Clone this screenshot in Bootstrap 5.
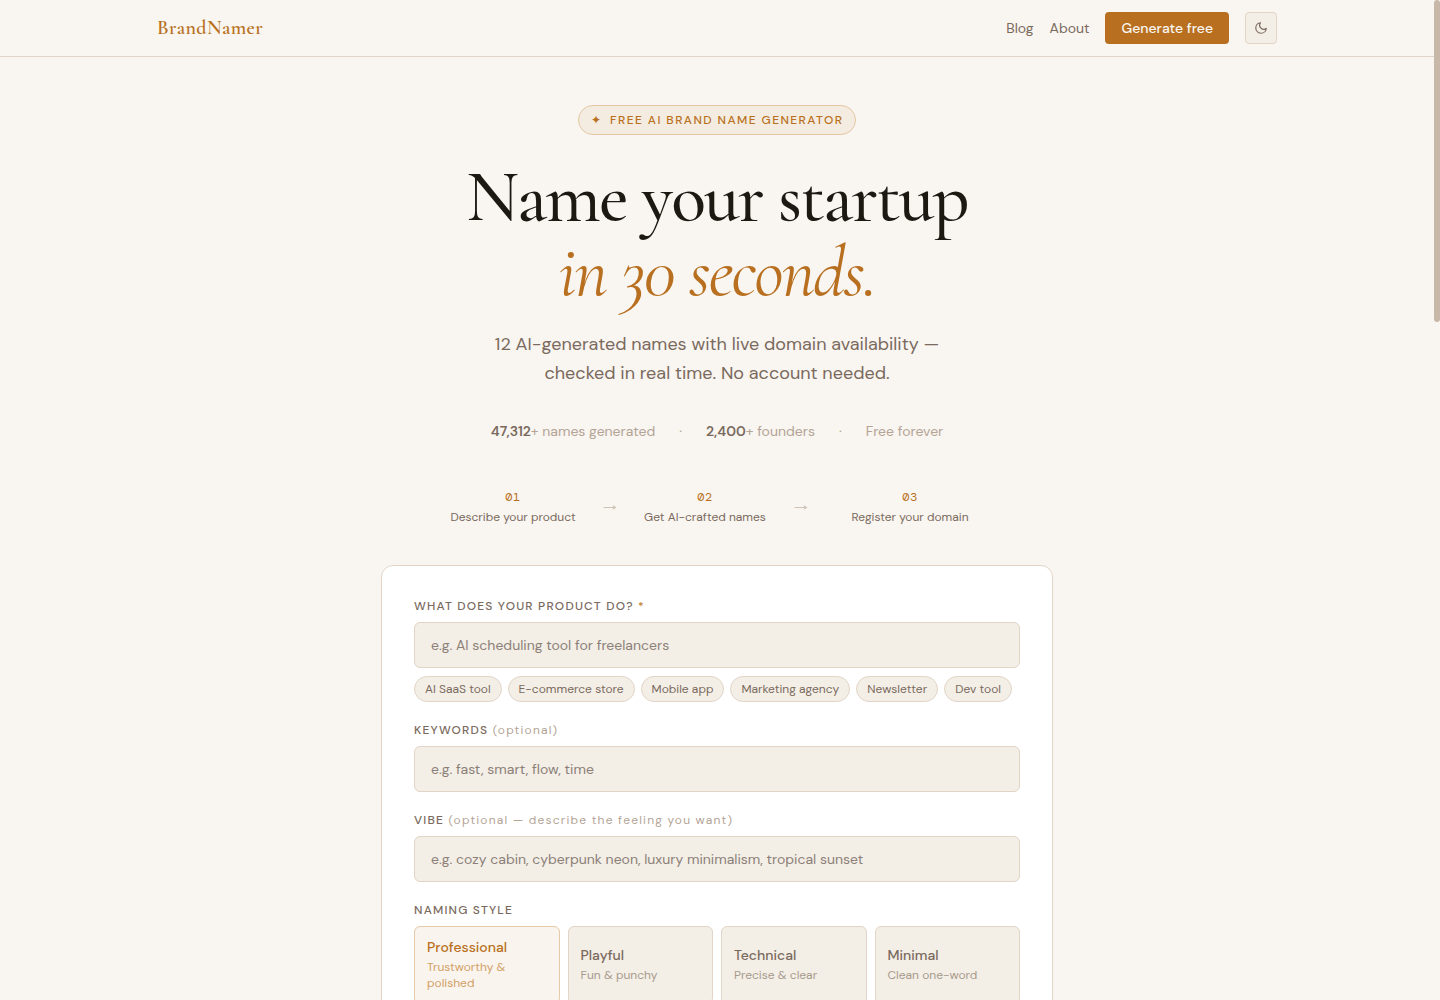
<!DOCTYPE html>
<html lang="en">
<head>
<meta charset="utf-8">
<meta name="viewport" content="width=device-width, initial-scale=1">
<title>BrandNamer</title>
<link rel="stylesheet" href="https://cdn.jsdelivr.net/npm/bootstrap@5.3.0/dist/css/bootstrap.min.css">
<style>
:root {
  --ink: #1c1812;
  --ink-soft: #7a6a5e;
  --ink-faint: #b3a496;
  --accent: #b87020;
  --paper: #f9f5f0;
  --sand: #f3eee6;
  --line: #e2d5c7;
  --serif: "Cormorant Garamond", "Liberation Serif", serif;
  --sans: "DM Sans", Inter, sans-serif;
}
html { scrollbar-width: none; }
html::-webkit-scrollbar { display: none; }
body { background: var(--paper); color: var(--ink-soft); font-family: var(--sans); padding-right: 6px; }
.scroll-thumb { position: fixed; top: 0; right: 0; width: 6px; height: 322px; border-radius: 3px; background: #c8b8a8; }

.site-nav { border-bottom: 1px solid var(--line); }
.nav-inner { max-width: 1120px; height: 56px; }
.logo { font: 600 20px/24px var(--serif); letter-spacing: 0.02em; color: var(--accent); text-decoration: none; }
.nav-text { font-size: 14px; line-height: 20px; color: var(--ink-soft); text-decoration: none; }
.btn-accent { background: var(--accent); color: var(--paper); font-size: 14px; line-height: 20px; font-weight: 500; padding: 6px 16px; border: 0; border-radius: 4px; }
.btn-accent:hover { background: #a5631a; color: var(--paper); }
.theme-btn { width: 32px; height: 32px; border: 1px solid var(--line); border-radius: 4px; background: var(--sand); color: var(--ink-soft); }

.page-col { max-width: 672px; padding-top: 48px; }
.eyebrow { height: 30px; padding: 0 12px; border: 1px solid #e3c7a3; border-radius: 15px; background: #f4ece0; color: var(--accent); font-size: 12px; line-height: 16px; font-weight: 500; letter-spacing: 0.12em; margin-bottom: 25px; }
.hero-title { font: 500 72px/75px var(--serif); letter-spacing: -0.025em; color: var(--ink); margin-bottom: 20px; }
.hero-title em { display: block; font-weight: 400; color: var(--accent); }
.hero-sub { font-size: 18px; line-height: 29px; max-width: 480px; margin-bottom: 32px; }
.stats { font-size: 14px; line-height: 22px; color: var(--ink-faint); gap: 24px; margin-bottom: 45px; }
.stats strong { font-weight: 600; color: var(--ink-soft); }
.steps { display: grid; grid-template-columns: 168px 26px 164px 28px 190px; justify-content: center; align-items: center; justify-items: center; text-align: center; margin-bottom: 38px; font-size: 12px; line-height: 20px; }
.step-no { font-family: "DM Mono", "JetBrains Mono", "Liberation Mono", monospace; letter-spacing: 0.05em; color: var(--accent); }
.step-arrow { color: #cfc3b6; }

.form-panel { background: #fff; border: 1px solid var(--line); border-radius: 12px; padding: 32px; margin-bottom: 64px; }
.field { margin-bottom: 20px; }
.field-label { display: block; font-size: 12px; line-height: 16px; font-weight: 500; letter-spacing: 0.1em; margin-bottom: 8px; }
.field-label span { font-weight: 400; color: var(--ink-faint); }
.field-label .req { color: var(--accent); }
.field .form-control { height: 46px; padding: 0 16px; background: var(--sand); border: 1px solid var(--line); border-radius: 6px; font-size: 14px; color: var(--ink); }
.field .form-control::placeholder { color: #8b8078; opacity: 1; }
.chips { gap: 6px; margin-top: 8px; }
.chip { height: 26px; padding: 0 10px; border: 1px solid var(--line); border-radius: 13px; background: var(--sand); color: var(--ink-soft); font-size: 12px; line-height: 16px; }
.style-grid { display: grid; grid-template-columns: repeat(4, minmax(0, 1fr)); gap: 8px; }
.style-card { padding: 12px; border: 1px solid var(--line); border-radius: 6px; background: var(--sand); color: var(--ink-soft); text-align: left; font-size: 14px; line-height: 16px; font-weight: 500; }
.style-card small { display: block; margin-top: 4px; font-size: 12px; line-height: 16px; font-weight: 400; color: #a79a8d; }
.style-card.picked { background: #f9f4ed; border-color: #e6c9a6; color: var(--accent); }
.style-card.picked small { color: #d2a067; }
</style>
<script src="https://cdn.jsdelivr.net/npm/bootstrap@5.3.0/dist/js/bootstrap.bundle.min.js"></script>
</head>
<body>
<header class="site-nav">
  <nav class="nav-inner mx-auto d-flex align-items-center justify-content-between">
    <a class="logo" href="#">BrandNamer</a>
    <div class="d-flex align-items-center gap-3">
      <a class="nav-text" href="#">Blog</a>
      <a class="nav-text" href="#">About</a>
      <a class="btn btn-accent" href="#generate">Generate free</a>
      <button type="button" class="theme-btn p-0 d-flex align-items-center justify-content-center" aria-label="Toggle theme">
        <svg width="14" height="14" viewBox="0 0 24 24" fill="none" stroke="currentColor" stroke-width="2" stroke-linecap="round" stroke-linejoin="round" aria-hidden="true"><path d="M21 12.79A9 9 0 1 1 11.21 3 7 7 0 0 0 21 12.79z"/></svg>
      </button>
    </div>
  </nav>
</header>

<main class="page-col mx-auto">
  <section class="d-flex flex-column align-items-center text-center">
    <div class="eyebrow d-inline-flex align-items-center gap-2"><span>✦</span>FREE AI BRAND NAME GENERATOR</div>
    <h1 class="hero-title">Name your startup <em>in 30 seconds.</em></h1>
    <p class="hero-sub">12 AI-generated names with live domain availability —<br>checked in real time. No account needed.</p>
    <div class="stats d-flex">
      <span><strong>47,312</strong>+ names generated</span><span>·</span>
      <span><strong>2,400</strong>+ founders</span><span>·</span>
      <span>Free forever</span>
    </div>
  </section>

  <div class="steps">
    <div><div class="step-no">01</div>Describe your product</div>
    <svg class="step-arrow" width="14" height="7" viewBox="0 0 14 7" aria-hidden="true"><path d="M0.5 3.5H11" stroke="currentColor"/><path d="M9.5 1L13.5 3.5L9.5 6L10.5 3.5Z" fill="currentColor"/></svg>
    <div><div class="step-no">02</div>Get AI-crafted names</div>
    <svg class="step-arrow" width="14" height="7" viewBox="0 0 14 7" aria-hidden="true"><path d="M0.5 3.5H11" stroke="currentColor"/><path d="M9.5 1L13.5 3.5L9.5 6L10.5 3.5Z" fill="currentColor"/></svg>
    <div><div class="step-no">03</div>Register your domain</div>
  </div>

  <form class="form-panel" id="generate">
    <div class="field">
      <label class="field-label" for="product">WHAT DOES YOUR PRODUCT DO? <span class="req">*</span></label>
      <input class="form-control" id="product" type="text" placeholder="e.g. AI scheduling tool for freelancers">
      <div class="chips d-flex flex-wrap">
        <button type="button" class="chip">AI SaaS tool</button>
        <button type="button" class="chip">E-commerce store</button>
        <button type="button" class="chip">Mobile app</button>
        <button type="button" class="chip">Marketing agency</button>
        <button type="button" class="chip">Newsletter</button>
        <button type="button" class="chip">Dev tool</button>
      </div>
    </div>
    <div class="field">
      <label class="field-label" for="keywords">KEYWORDS <span>(optional)</span></label>
      <input class="form-control" id="keywords" type="text" placeholder="e.g. fast, smart, flow, time">
    </div>
    <div class="field">
      <label class="field-label" for="vibe">VIBE <span>(optional — describe the feeling you want)</span></label>
      <input class="form-control" id="vibe" type="text" placeholder="e.g. cozy cabin, cyberpunk neon, luxury minimalism, tropical sunset">
    </div>
    <div role="group" aria-labelledby="style-label">
      <div class="field-label" id="style-label">NAMING STYLE</div>
      <div class="style-grid">
        <button type="button" class="style-card picked" aria-pressed="true">Professional<small>Trustworthy &amp; polished</small></button>
        <button type="button" class="style-card" aria-pressed="false">Playful<small>Fun &amp; punchy</small></button>
        <button type="button" class="style-card" aria-pressed="false">Technical<small>Precise &amp; clear</small></button>
        <button type="button" class="style-card" aria-pressed="false">Minimal<small>Clean one-word</small></button>
      </div>
    </div>
  </form>
</main>
<div class="scroll-thumb" aria-hidden="true"></div>
</body>
</html>
